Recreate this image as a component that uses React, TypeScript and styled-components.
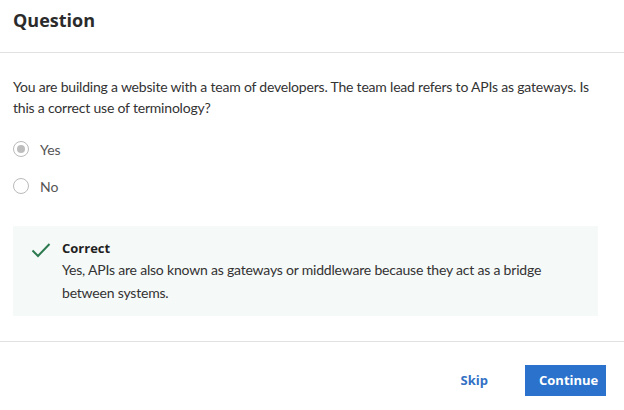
import React from "react";
import styled, { createGlobalStyle } from "styled-components";

const GlobalStyle = createGlobalStyle`
  html, body {
    margin: 0;
    padding: 0;
    background: #fff;
  }
  body {
    font-family: Lato, "Noto Sans", sans-serif;
    color: #333;
  }
`;

const Dialog = styled.div`
  width: 624px;
  height: 410px;
  display: flex;
  flex-direction: column;
  background: #fff;
`;

const Header = styled.header`
  flex-shrink: 0;
  height: 53px;
  padding: 0 13px;
  border-bottom: 1px solid #e1e1e1;
  box-sizing: border-box;
  display: flex;
  align-items: flex-start;
  h1 {
    margin: 6px 0 0;
    font-family: "Open Sans", sans-serif;
    font-size: 18px;
    font-weight: 700;
    color: #2b2b2b;
    line-height: 28px;
  }
`;

const Body = styled.div`
  padding: 23px 26px 0 13px;
  flex: 1;
`;

const Prompt = styled.p`
  margin: 0;
  font-size: 14px;
  letter-spacing: -0.2px;
  line-height: 21px;
  color: #333;
`;

const Options = styled.div`
  display: flex;
  flex-direction: column;
  gap: 15px;
  margin-top: 20px;
`;

const Option = styled.label`
  display: flex;
  align-items: center;
  gap: 11px;
  height: 22px;
  font-size: 14px;
  color: #555;
`;

const Radio = styled.span<{ $checked?: boolean }>`
  width: 16px;
  height: 16px;
  box-sizing: border-box;
  border-radius: 50%;
  border: 1.5px solid #bababa;
  display: flex;
  align-items: center;
  justify-content: center;
  &::after {
    content: "";
    width: 8px;
    height: 8px;
    border-radius: 50%;
    background: ${(p) => (p.$checked ? "#bdbdbd" : "transparent")};
  }
`;

const Feedback = styled.div`
  margin-top: 29px;
  width: 585px;
  height: 90px;
  box-sizing: border-box;
  background: #f5f9f8;
  padding: 12px 0 0 18px;
  display: flex;
  gap: 11px;
`;

const FeedbackText = styled.div`
  font-size: 14px;
  letter-spacing: -0.2px;
  line-height: 23px;
  color: #333;
  strong {
    display: block;
    font-family: "Open Sans", sans-serif;
    font-weight: 700;
    font-size: 13px;
    letter-spacing: 0;
    line-height: 20px;
    color: #1f1f1f;
  }
`;

const Footer = styled.footer`
  flex-shrink: 0;
  height: 69px;
  border-top: 1px solid #e1e1e1;
  box-sizing: border-box;
  display: flex;
  align-items: center;
  justify-content: flex-end;
  padding: 8px 18px 0 0;
  gap: 23px;
`;

const Button = styled.button<{ $primary?: boolean }>`
  font-family: "Open Sans", sans-serif;
  font-weight: 700;
  font-size: 13px;
  height: 31px;
  border: none;
  cursor: pointer;
  padding: 0 14px;
  background: ${(p) => (p.$primary ? "#2a72cb" : "transparent")};
  color: ${(p) => (p.$primary ? "#fff" : "#3471c5")};
  width: ${(p) => (p.$primary ? "81px" : "auto")};
`;

const CheckIcon = () => (
  <svg width="20" height="16" viewBox="0 0 20 16" style={{ marginTop: 4 }}>
    <path d="M1.5 8.5 L7 14 L18.5 2" fill="none" stroke="#2e7a50" strokeWidth="2" />
  </svg>
);

export default function App() {
  return (
    <>
      <GlobalStyle />
      <Dialog>
        <Header>
          <h1>Question</h1>
        </Header>
        <Body>
          <Prompt>
            You are building a website with a team of developers. The team lead refers to APIs as gateways. Is
            this a correct use of terminology?
          </Prompt>
          <Options>
            <Option>
              <Radio $checked />
              Yes
            </Option>
            <Option>
              <Radio />
              No
            </Option>
          </Options>
          <Feedback>
            <CheckIcon />
            <FeedbackText>
              <strong>Correct</strong>
              Yes, APIs are also known as gateways or middleware because they act as a bridge
              <br />
              between systems.
            </FeedbackText>
          </Feedback>
        </Body>
        <Footer>
          <Button>Skip</Button>
          <Button $primary>Continue</Button>
        </Footer>
      </Dialog>
    </>
  );
}
